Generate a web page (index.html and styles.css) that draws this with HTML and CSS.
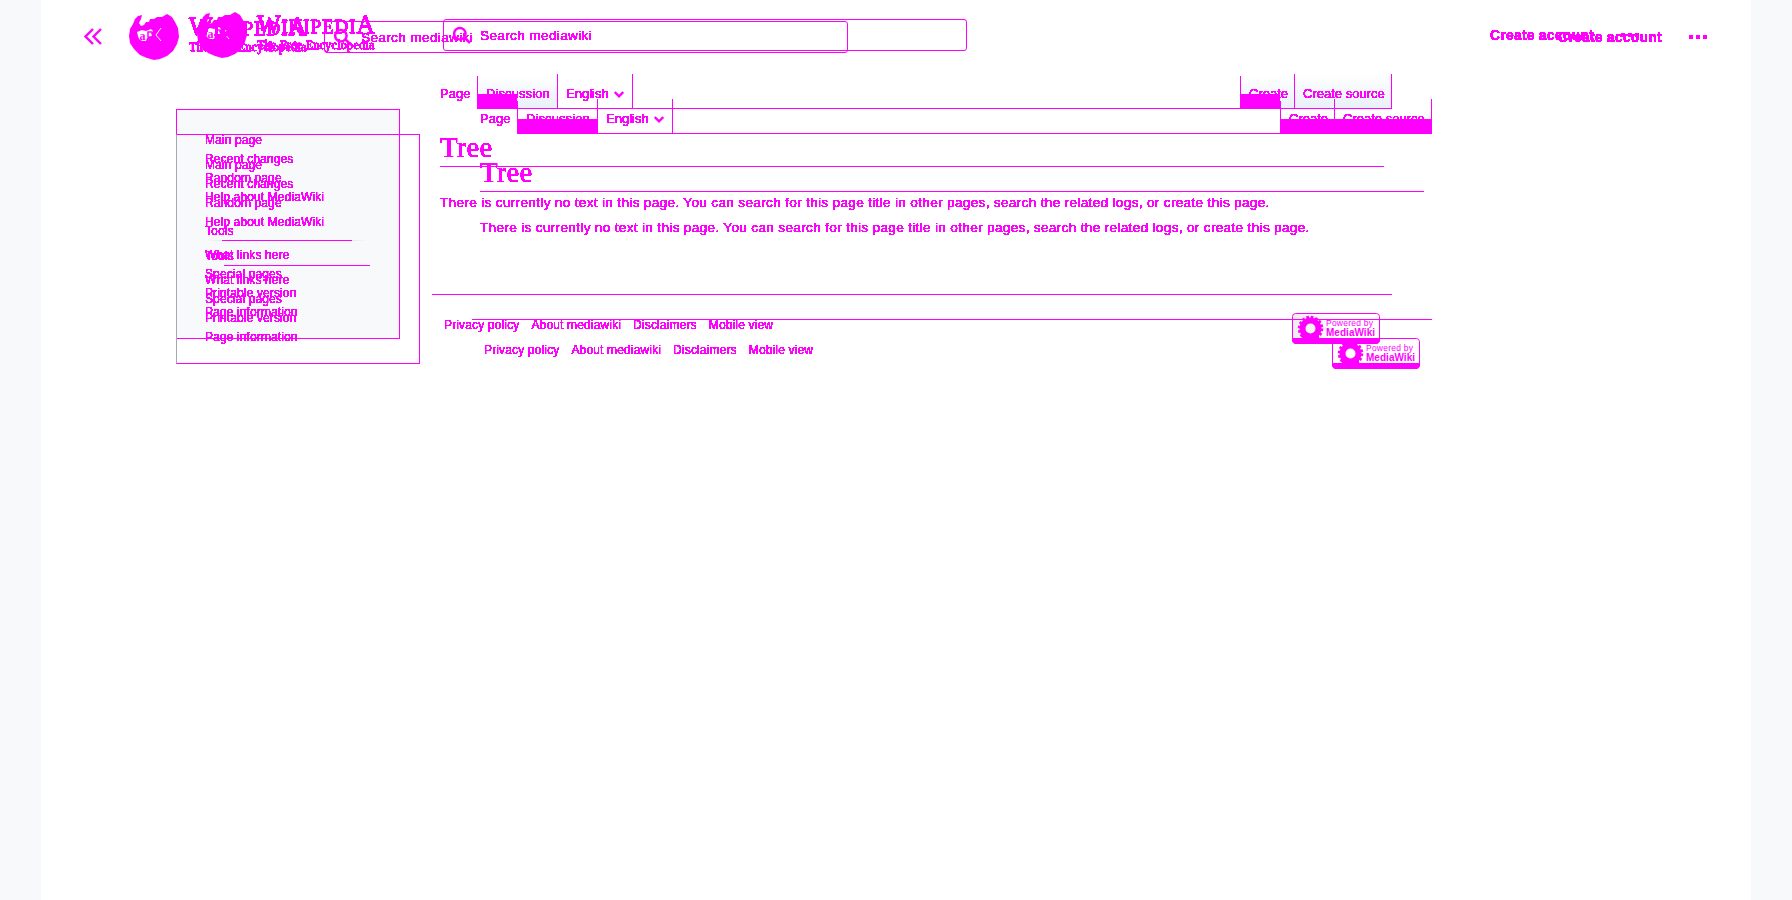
FILE: index.html
```
<!DOCTYPE html>
<html lang="en">
<head>
<meta charset="utf-8">
<title>Tree - mediawiki</title>
<link rel="stylesheet" href="styles.css">
</head>
<body>
<svg class="defs" width="0" height="0">
  <filter id="solid" x="-5%" y="-20%" width="110%" height="140%" color-interpolation-filters="sRGB">
    <feComponentTransfer><feFuncA type="linear" slope="40" intercept="-4"/></feComponentTransfer>
  </filter>
  <symbol id="globe" viewBox="0 0 50 47">
    <path fill="#f0f" fill-rule="evenodd" d="M6 5 9 2 13 1 12 5 10 9 12 12 15 11 17 8 20 8 21 5 25 5 28 3 33 3 38 0 43 3 46 8 49 14 50 23 48 30 44 37 38 42 31 45 25 46 18 44 11 41 5 35 1 29 0 22 1 15 4 10ZM8 18 13 16 17 17 22 15 24 17 22 19 23 22 18 24 17 27 13 27 10 25 9 22Z"/>
    <path fill="none" stroke="#fff" d="M32 14 27 21 32 27"/>
    <text x="10.500" y="26" class="globe-a">a</text>
    <path fill="none" stroke="#f0f" stroke-width="1.500" d="M23 18h-4v5h4"/>
  </symbol>
  <symbol id="loupe" viewBox="0 0 18 18"><path fill="none" stroke="#f0f" stroke-width="2.500" d="M12.500 7a5.700 5.700 0 1 1-11.300 0 5.700 5.700 0 0 1 11.300 0ZM11 11l6 6"/></symbol>
  <symbol id="badge" viewBox="0 0 88 31">
    <path fill="#f0f" d="M0 25h88v3l-3 3H3l-3-3z"/>
    <rect x=".5" y=".5" width="87" height="30" rx="3" fill="none" stroke="#f0f"/>
    <circle cx="18.500" cy="15.500" r="8" fill="none" stroke="#f0f" stroke-width="6"/>
    <circle cx="18.500" cy="15.500" r="11.500" fill="none" stroke="#f0f" stroke-width="2.500" stroke-dasharray="2.600 1.915"/>
    <path fill="#f0f" d="M10 22h17v4H10z"/>
    <text class="badge-small" x="34" y="13" textLength="47">Powered by</text>
    <text class="badge-big" x="34" y="23" textLength="49">MediaWiki</text>
  </symbol>
</svg>
<div class="page">
  <div class="layer before">
    <header class="header">
      <div class="logo"><svg width="50" height="47"><use href="#globe"/></svg>
        <div class="wordmark ink"><div class="name"><b>W</b>IKIPEDI<b>A</b></div><div class="tag">The Free Encyclopedia</div></div></div>
      <div class="search"><svg width="18" height="18"><use href="#loupe"/></svg><span class="ink">Search mediawiki</span></div>
      <div class="user"><span class="ink">Create account</span><i class="dots"></i></div>
    </header>
    <div class="main">
      <nav class="sidebar">
        <ul class="ink"><li>Main page</li><li>Recent changes</li><li>Random page</li><li>Help about MediaWiki</li></ul>
        <h3 class="ink">Tools</h3><div class="rule"></div>
        <ul class="ink"><li>What links here</li><li>Special pages</li><li>Printable version</li><li>Page information</li></ul>
      </nav>
      <section class="content">
        <div class="tabs">
          <div class="tab current"><span class="ink">Page</span></div><div class="tab talk"><span class="ink">Discussion</span></div>
          <div class="tab lang"><span class="ink">English</span><svg width="10" height="7" viewBox="0 0 10 7"><path d="M.7 1 5 5.300 9.300 1"/></svg></div>
          <div class="tab create"><span class="ink">Create</span></div><div class="tab source"><span class="ink">Create source</span></div>
        </div>
        <h1><span class="ink">Tree</span></h1>
        <p class="ink">There is currently no text in this page. You can search for this page title in other pages, search the related logs, or create this page.</p>
        <footer><div class="links"><span class="ink">Privacy policy</span><span class="ink">About mediawiki</span><span class="ink">Disclaimers</span><span class="ink">Mobile view</span></div><svg class="badge" width="88" height="31"><use href="#badge"/></svg></footer>
      </section>
    </div>
  </div>
  <div class="layer after">
    <header class="header">
      <svg class="collapse" width="18" height="17" viewBox="0 0 18 17"><path d="M9 1 1.500 8.500 9 16M17 1 9.500 8.500 17 16"/></svg>
      <div class="logo"><svg width="50" height="47"><use href="#globe"/></svg>
        <div class="wordmark ink"><div class="name"><b>W</b>IKIPEDI<b>A</b></div><div class="tag">The Free Encyclopedia</div></div></div>
      <div class="search"><svg width="18" height="18"><use href="#loupe"/></svg><span class="ink">Search mediawiki</span></div>
      <div class="user"><span class="ink">Create account</span><i class="dots"></i></div>
    </header>
    <div class="main">
      <nav class="sidebar">
        <ul class="ink"><li>Main page</li><li>Recent changes</li><li>Random page</li><li>Help about MediaWiki</li></ul>
        <h3 class="ink">Tools</h3><div class="rule"></div>
        <ul class="ink"><li>What links here</li><li>Special pages</li><li>Printable version</li><li>Page information</li></ul>
      </nav>
      <section class="content">
        <div class="tabs">
          <div class="tab current"><span class="ink">Page</span></div><div class="tab talk"><span class="ink">Discussion</span></div>
          <div class="tab lang"><span class="ink">English</span><svg width="10" height="7" viewBox="0 0 10 7"><path d="M.7 1 5 5.300 9.300 1"/></svg></div>
          <div class="tab create"><span class="ink">Create</span></div><div class="tab source"><span class="ink">Create source</span></div>
        </div>
        <h1><span class="ink">Tree</span></h1>
        <p class="ink">There is currently no text in this page. You can search for this page title in other pages, search the related logs, or create this page.</p>
        <footer><div class="links"><span class="ink">Privacy policy</span><span class="ink">About mediawiki</span><span class="ink">Disclaimers</span><span class="ink">Mobile view</span></div><svg class="badge" width="88" height="31"><use href="#badge"/></svg></footer>
      </section>
    </div>
  </div>
</div>
</body>
</html>
```
FILE: styles.css
```
* { box-sizing: border-box; }
body { margin: 0; background: #f8f9fb; color: #f0f; font: 13.6px/22px "Liberation Sans", Arial, sans-serif; }
.defs { position: absolute; }
.ink { filter: url(#solid); white-space: nowrap; }
svg { display: block; flex: none; }
.page { display: grid; width: 1710px; height: 900px; margin: 0 auto; background: #fff; overflow: hidden; }
.layer { grid-area: 1 / 1; width: 1710px; }

.header { display: flex; align-items: flex-start; height: 74px; }
.before .header { padding: 12px 0 0 156px; }
.after .header { height: 99px; padding: 14px 0 0 44px; }
.collapse { margin: 14px 27px 0 -1px; }
.collapse path { fill: none; stroke: #f0f; stroke-width: 2.4; }
.logo { display: flex; width: 178px; }
.wordmark { margin: 0 0 0 10px; font-family: "Liberation Serif", "Times New Roman", serif; -webkit-text-stroke: .4px #f0f; }
.name { height: 26px; font-size: 19px; line-height: 25px; letter-spacing: .9px; }
.name b { font-weight: 400; font-size: 25px; }
.tag { font-size: 12px; line-height: 14px; letter-spacing: .3px; }
.globe-a { font: bold 12px "Liberation Serif", serif; fill: #f0f; }
.search { display: flex; width: 524px; height: 32px; border: 1px solid #f0f; border-radius: 3px; letter-spacing: .35px; }
.before .search { margin: 7px 0 0 68px; }
.after .search { margin: 7px 0 0 17px; }
.search svg { margin: 6px 9px 0 9px; }
.search .ink { line-height: 32px; }
.user { display: flex; font-size: 14px; font-weight: 700; line-height: 20px; letter-spacing: .2px; }
.user .ink { width: 103px; }
.before .user { margin: 13px 0 0 523px; }
.after .user { margin: 13px 0 0 710px; }
.dots { width: 18px; height: 4px; margin: 8px 0 0 28px; background: repeating-linear-gradient(90deg, #f0f 0 4px, transparent 4px 7px); }

.main { display: flex; align-items: flex-start; padding-left: 135px; }
.sidebar { width: 224px; height: 230px; margin: 35px 32px 0 0; padding: 21px 0 0 28px; border: 1px solid #f0f; font-size: 12px; line-height: 19px; letter-spacing: .12px; }
.before .sidebar { background: #f8f9fb; }
.after .sidebar { width: 244px; margin-right: 52px; border-left-color: #a2a9b1; }
.sidebar ul { margin: 0; padding: 0; list-style: none; }
.sidebar h3 { margin: 15px 0 0; font-size: 12px; font-weight: 400; }
.rule { width: 162px; height: 1px; margin: -1px 0 5px 1px; background: linear-gradient(90deg, transparent, #e8e9ec 16px, #f0f 16px 146px, #e8e9ec 146px, transparent); }
.after .rule { width: 146px; margin-left: 19px; background: #f0f; }

.content { width: 960px; }
.tabs { display: flex; align-items: flex-end; height: 35px; font-size: 13px; line-height: 15px; background: linear-gradient(#f0f, #f0f) 45px 100% / 915px 1px no-repeat; }
.tab { display: flex; height: 35px; padding: 12px 0 0 8px; border-left: 1px solid #f0f; }
.current { width: 45px; padding-left: 8px; border: 0; }
.talk { width: 80px; height: 33px; padding-top: 10px; letter-spacing: .1px; }
.lang { width: 76px; border-right: 1px solid #f0f; }
.lang svg { margin: 5px 0 0 5px; }
.lang path { fill: none; stroke: #f0f; stroke-width: 2.4; }
.create { width: 54px; height: 33px; margin-left: auto; padding-top: 10px; }
.source { width: 98px; border-right: 1px solid #f0f; }
.before .talk, .before .create, .before .source { border-bottom: 1px solid #f0f; background: linear-gradient(#fff, #e8f0f8); }
.before .talk, .before .create { background: linear-gradient(#f0f, #f0f) 0 100% / 39px 14px no-repeat, linear-gradient(#fff, #e8f0f8); }
.after .talk, .after .create, .after .source { background: linear-gradient(#f0f, #f0f) 0 100% / 100% 15px no-repeat; }
h1 { height: 38px; margin: 20px 8px 0 8px; border-bottom: 1px solid #f0f; font: 400 28.8px/36px "Liberation Serif", "Times New Roman", serif; }
h1 .ink { display: inline-block; letter-spacing: .2px; }
p { margin: 25px 8px 80px; letter-spacing: .32px; }
footer { display: flex; justify-content: space-between; padding: 18px 12px 0 12px; border-top: 1px solid #f0f; }
.links { display: flex; gap: 12px; padding-top: 2px; font-size: 12px; line-height: 20px; letter-spacing: .15px; }
.badge { background: linear-gradient(90deg, #eee, #fff 60%); border-radius: 3px; }
.after .badge { background: none; }
.badge text { filter: url(#solid); stroke: #f0f; stroke-width: .3px; }
.badge-small { font: 8.5px "Liberation Sans", sans-serif; fill: #f0f; }
.badge-big { font: bold 10px "Liberation Sans", sans-serif; fill: #f0f; }
```
